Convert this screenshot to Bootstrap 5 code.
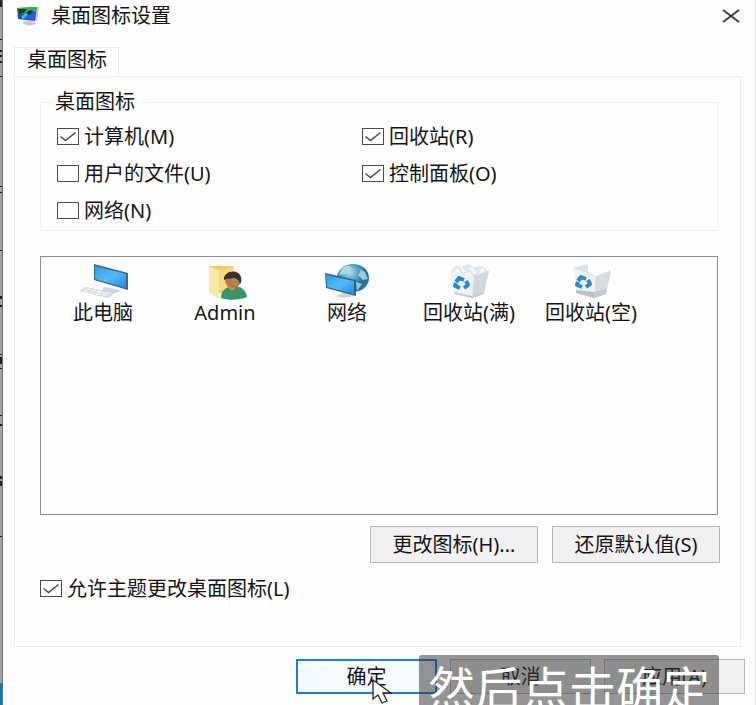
<!DOCTYPE html>
<html lang="zh-CN">
<head>
<meta charset="utf-8">
<meta name="viewport" content="width=device-width, initial-scale=1">
<title>桌面图标设置</title>
<link rel="stylesheet" href="https://cdn.jsdelivr.net/npm/bootstrap@5.3.0/dist/css/bootstrap.min.css">
<style>
  body { font-family: "Noto Sans", "Noto Sans CJK SC", sans-serif; font-size: 20px; line-height: 24px; color: #141414; background: #fefefe; }
  .backdrop-edge { width: 3px; background: #a3a3a3; border-right: 1px solid #707070; }
  .backdrop-right { width: 1px; background: #dcdcdc; }
  .title-bar { height: 47px; padding: 4px 15px 0 14px; }
  .title-bar h1 { font-size: 20px; line-height: 24px; font-weight: 400; }
  .close-btn { width: 18px; height: 24px; }
  .tab-area { padding: 0 14px 0 11px; }
  .nav-tabs { border: 0; --bs-nav-tabs-border-radius: 0; }
  .nav-tabs .nav-link, .nav-tabs .nav-link.active { height: 30px; padding: 0 11px 4px 12px; color: #141414; background: #fefefe; border: 1px solid #ebebeb; border-bottom-color: #fefefe; line-height: 24px; }
  .panel { border: 1px solid #ebebeb; padding: 15px 22px 39px 25px; }
  .group { border: 1px solid #f1f1f1; padding: 6px 50px 1px 16px; margin-bottom: 25px; }
  .group legend { font-size: 20px; line-height: 20px; padding: 0 3px; margin: 0 0 0 -5px; }
  .option { height: 37px; gap: 5px; }
  .option .form-check-input { width: 22px; height: 17px; border: 1px solid #4a4a4a; border-radius: 0; background-color: #fefefe; }
  .option .form-check-input:checked { background-color: #fefefe; background-size: 100% 100%; background-image: url("data:image/svg+xml,%3Csvg xmlns='http://www.w3.org/2000/svg' viewBox='0 0 20 15'%3E%3Cpath fill='none' stroke='%23444' stroke-width='1.4' d='M2.5 7.5 7.5 11.5 17.5 3.5'/%3E%3C/svg%3E"); }
  .icon-list { border: 1px solid #8c8c8c; min-height: 120px; padding: 5px 1px; background: #fefefe; }
  .icon-item { width: 122px; height: 64px; gap: 1px; color: #141414; }
  .win-btn { --bs-btn-border-radius: 0; --bs-btn-font-size: 20px; --bs-btn-line-height: 24px; --bs-btn-padding-x: 0; --bs-btn-padding-y: 4px; --bs-btn-bg: #f1f1f1; --bs-btn-border-color: #b6b6b6; --bs-btn-color: #141414; --bs-btn-hover-bg: #e6f1fb; --bs-btn-hover-color: #141414; --bs-btn-hover-border-color: #0078d7; }
  .btn-wide { width: 168px; height: 37px; }
  .btn-foot { width: 141px; height: 35px; }
  .btn-ok { --bs-btn-bg: #f5faff; --bs-btn-border-color: #1581dc; --bs-btn-border-width: 2px; --bs-btn-padding-y: 3px; }
  .actions { gap: 14px; margin: 11px -2px 7px 0; }
  .foot { gap: 13px; padding: 12px 10px 11px; }
  .pointer { left: 76px; top: 20px; }
  .caption-strip { right: 36px; top: 8px; padding: 0 9px; font-size: 47px; line-height: 62px; color: #fff; background: rgba(54, 54, 54, .53); border-radius: 3px; font-family: "Noto Sans CJK SC", sans-serif; }
</style>
<script src="https://cdn.jsdelivr.net/npm/bootstrap@5.3.0/dist/js/bootstrap.bundle.min.js"></script>
</head>
<body>
<div class="d-flex vh-100 overflow-hidden">
  <div class="backdrop-edge flex-shrink-0">
    <svg class="d-block" width="2" height="705" aria-hidden="true"><path fill="#222" d="M0 0h2v7H0zM0 39h2v1H0zM0 50h2v2H0zM0 55h2v2H0zM0 61h2v2H0zM0 76h2v1H0zM0 186h2v1H0zM0 192h2v1H0zM0 250h2v1H0zM0 296h2v3H0zM0 305h2v2H0zM0 354h2v1H0zM0 357h2v7H0zM0 368h2v1H0zM0 415h2v1H0zM0 424h2v2H0zM0 476h2v3H0zM0 481h2v5H0zM0 536h2v1H0z"/><path fill="#087db8" d="M0 683h2v22H0z"/></svg>
  </div>
  <main class="d-flex flex-column flex-grow-1">
    <header class="title-bar d-flex align-items-start">
      <svg class="flex-shrink-0" width="22" height="24" viewBox="0 0 22 24" aria-hidden="true">
        <path d="M8 15h8l3 5-8 2-5-3z" fill="#d8dde4"/><path d="M5 19l6-2 8 2-3 2-6 0z" fill="#c3cad3"/>
        <path d="M0 4l21-1-2 14L1 15z" fill="#1c4fc4"/><path d="M0 4l20-1-1 5-7-1-5 3-6-1z" fill="#35b83c"/><path d="M1 5l9 0-3 4-5 1z" fill="#123c3c"/><path d="M9 9l4-3 3 1-4 4z" fill="#14323c"/><path d="M4 14l5-4 4 1 5-3-1 8z" fill="#2a5ee8"/><path d="M4 13l5-4 2 1-5 5z" fill="#24d2df"/><path d="M20 3h2l-2 14-2 0z" fill="#b9cce0"/>
      </svg>
      <h1 class="mb-0 ms-2 ps-1 flex-grow-1">桌面图标设置</h1>
      <button type="button" class="close-btn btn p-0 border-0 d-flex align-items-center" aria-label="关闭"><svg width="18" height="14" viewBox="0 0 18 14"><path d="M1 1l16 12M17 1L1 13" stroke="#333" stroke-width="1.6"/></svg></button>
    </header>
    <div class="tab-area d-flex flex-column flex-grow-1">
      <ul class="nav nav-tabs" role="tablist">
        <li class="nav-item" role="presentation"><button type="button" id="icons-tab" class="nav-link active" role="tab" aria-selected="true" aria-controls="icons-panel">桌面图标</button></li>
      </ul>
      <section id="icons-panel" class="panel d-flex flex-column flex-grow-1" role="tabpanel" aria-labelledby="icons-tab">
        <fieldset class="group">
          <legend class="float-none w-auto">桌面图标</legend>
          <div class="row g-0">
            <div class="col-6 option d-flex align-items-center"><input class="form-check-input m-0" type="checkbox" id="c1" checked><label for="c1">计算机(M)</label></div>
            <div class="col-6 option d-flex align-items-center"><input class="form-check-input m-0" type="checkbox" id="c2" checked><label for="c2">回收站(R)</label></div>
            <div class="col-6 option d-flex align-items-center"><input class="form-check-input m-0" type="checkbox" id="c3"><label for="c3">用户的文件(U)</label></div>
            <div class="col-6 option d-flex align-items-center"><input class="form-check-input m-0" type="checkbox" id="c4" checked><label for="c4">控制面板(O)</label></div>
            <div class="col-6 option d-flex align-items-center"><input class="form-check-input m-0" type="checkbox" id="c5"><label for="c5">网络(N)</label></div>
          </div>
        </fieldset>
        <div class="icon-list d-flex flex-wrap align-content-start flex-grow-1">
          <div class="icon-item d-flex flex-column align-items-center">
            <svg class="flex-shrink-0" width="50" height="38" viewBox="0 0 50 38" aria-hidden="true">
              <defs><linearGradient id="scr" x2="1" y2="1"><stop stop-color="#2c9eea"/><stop offset=".5" stop-color="#55baf6"/><stop offset="1" stop-color="#1d8ce0"/></linearGradient></defs>
              <path d="M26 25l12 2 5 2-7 2-12-2z" fill="#cdd6df"/><path d="M16 2l34 9v17L16 18z" fill="#46657c"/><path d="M17 4l31 8v14L17 17z" fill="url(#scr)"/>
              <path d="M8 25l29 6-7 5L1 29z" fill="#d2d6da"/><path d="M7 27l26 5M5 29l26 5M12 26l-6 4M18 27l-6 5M24 28l-6 5M30 30l-6 5" stroke="#f6f7f8" stroke-width="1"/>
            </svg><span>此电脑</span>
          </div>
          <div class="icon-item d-flex flex-column align-items-center">
            <svg class="flex-shrink-0" width="50" height="38" viewBox="0 0 50 38" aria-hidden="true">
              <path d="M9 4h24v27H16z" fill="#f3cd62"/><path d="M9 4l10 4v28L9 31z" fill="#ffe9a0"/><path d="M19 8l15-3v23H19z" fill="#f9db7d"/>
              <path d="M21 36c0-8 5-11 12-12 7 0 13 3 14 11-7 3-18 4-26 1z" fill="#36966a"/><path d="M27 24l5 5 6-5-1-4H28z" fill="#c88c5e"/><ellipse cx="33" cy="18" rx="8" ry="8" fill="#b77d52"/><path d="M24 18c-1-9 14-12 17-3 1 4 0 6-1 7-1-4-2-5-6-6-4 1-7 0-10 2z" fill="#353331"/>
            </svg><span>Admin</span>
          </div>
          <div class="icon-item d-flex flex-column align-items-center">
            <svg class="flex-shrink-0" width="50" height="38" viewBox="0 0 50 38" aria-hidden="true">
              <defs><radialGradient id="glb" cx=".4" cy=".3"><stop stop-color="#b5e2ef"/><stop offset=".6" stop-color="#4c9fc0"/><stop offset="1" stop-color="#276f93"/></radialGradient></defs>
              <ellipse cx="31" cy="16" rx="16" ry="14" fill="url(#glb)"/><path d="M20 6c6-4 11-2 9 2l-5 4-7 1zM36 6l7 4 3 7-5 1-5-5 3-4zM34 20l6 2-5 7z" fill="#b7dfe8" opacity=".8"/>
              <path d="M19 29l11 3 3 2-12 2-8-2 7-2z" fill="#c9d5de"/><path d="M3 11l31 7v16L4 26z" fill="#32658d"/><path d="M4 13l28 6v13L5 25z" fill="url(#scr)"/>
            </svg><span>网络</span>
          </div>
          <div class="icon-item d-flex flex-column align-items-center">
            <svg class="flex-shrink-0" width="50" height="38" viewBox="0 0 50 38" aria-hidden="true">
              <path d="M7 9l5-6 7 1 5-2 7 3 7-1 7 6-8 6-27-2z" fill="#e3e6e9"/><path d="M11 8l6-4 5 5 6-5 4 6 7-4 2 4-12 4-19-1z" fill="#f7f8f9"/><path d="M15 6l4 6 6-4 5 6 6-5" fill="none" stroke="#cbd0d5"/>
              <path d="M6 9l24 5-2 22-18-4z" fill="#eff1f3"/><path d="M30 14l15-5-5 23-12 4z" fill="#d2d7dc"/><path d="M10 30l18 4 12-4v2l-12 4-18-4z" fill="#c6ccd2"/>
              <g fill="none" stroke="#2189d7" stroke-width="4" stroke-linejoin="round"><path d="M12 20l3-4 5 2M22 19l2 4-4 3M16 26l-5-2 1-3"/></g>
            </svg><span>回收站(满)</span>
          </div>
          <div class="icon-item d-flex flex-column align-items-center">
            <svg class="flex-shrink-0" width="50" height="38" viewBox="0 0 50 38" aria-hidden="true">
              <path d="M7 6l15-4v8l8 6z" fill="#dfe3e6"/><path d="M22 10l8 4 15-6-2 12-13 8z" fill="#e3e6e9"/><path d="M7 6l15 6 8 3-2 21-18-5z" fill="#f0f2f4"/><path d="M30 15l15-7-5 24-12 4z" fill="#d8dce1"/><path d="M10 28l18 2v6l-18-5z" fill="#b9c0c6"/><path d="M28 30l12-3v5l-12 4z" fill="#c6cbd0"/>
              <g fill="none" stroke="#2189d7" stroke-width="4" stroke-linejoin="round"><path d="M12 19l3-4 5 2M22 18l2 4-4 3M16 25l-5-2 1-3"/></g>
            </svg><span>回收站(空)</span>
          </div>
        </div>
        <div class="actions d-flex justify-content-end">
          <button type="button" class="btn win-btn btn-wide">更改图标(H)...</button>
          <button type="button" class="btn win-btn btn-wide">还原默认值(S)</button>
        </div>
        <div class="option d-inline-flex align-items-center flex-shrink-0"><input class="form-check-input m-0" type="checkbox" id="c6" checked><label for="c6">允许主题更改桌面图标(L)</label></div>
      </section>
    </div>
    <footer class="foot d-flex justify-content-end position-relative">
      <div class="position-relative">
        <button type="button" class="btn win-btn btn-foot btn-ok">确定</button>
        <svg class="pointer position-absolute z-3" width="20" height="26" viewBox="0 0 20 26" aria-hidden="true"><path d="M1 1v19l5-4 4 8 5-2-4-8h8z" fill="#fff" stroke="#252530" stroke-width="1.3"/></svg>
      </div>
      <button type="button" class="btn win-btn btn-foot">取消</button>
      <button type="button" class="btn win-btn btn-foot">应用(A)</button>
      <div class="caption-strip position-absolute text-nowrap pe-none">然后点击确定</div>
    </footer>
  </main>
  <div class="backdrop-right flex-shrink-0"></div>
</div>
</body>
</html>
